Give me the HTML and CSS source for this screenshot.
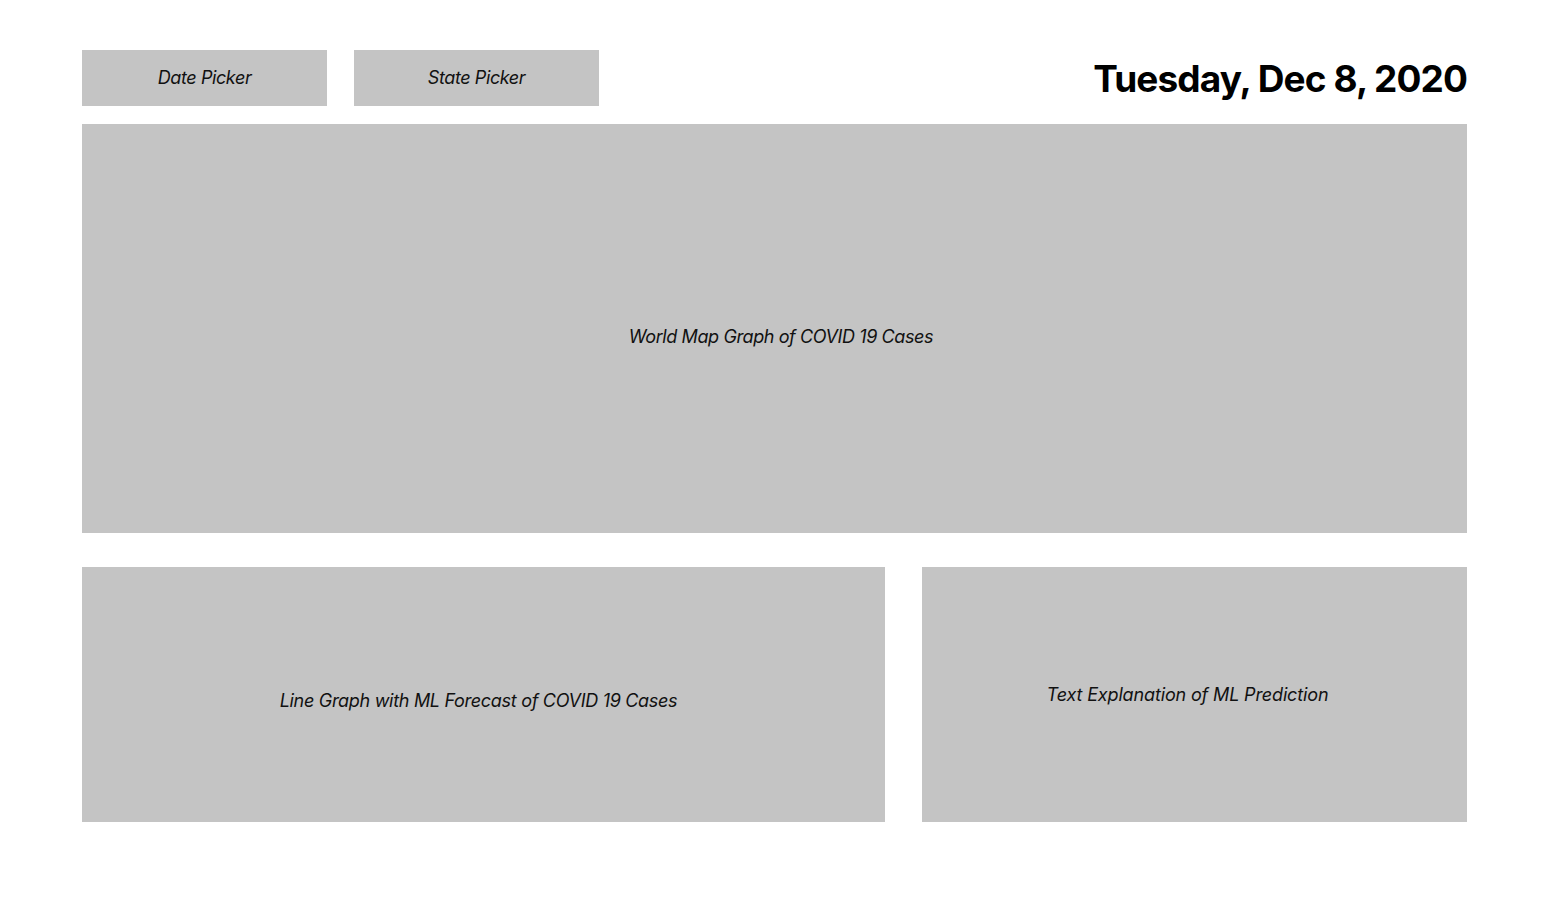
FILE: index.html
```html
<!DOCTYPE html>
<html lang="en">
<head>
<meta charset="utf-8">
<title>COVID 19 Dashboard</title>
<link rel="stylesheet" href="styles.css">
</head>
<body>
<div class="page">
  <header class="header">
    <div class="pickers">
      <div class="box picker">Date Picker</div>
      <div class="box picker">State Picker</div>
    </div>
    <h1 class="date">Tuesday, Dec 8, 2020</h1>
  </header>
  <section class="box map">World Map Graph of COVID 19 Cases</section>
  <div class="bottom">
    <section class="box line">Line Graph with ML Forecast of COVID 19 Cases</section>
    <section class="box explain">Text Explanation of ML Prediction</section>
  </div>
</div>
</body>
</html>
```
FILE: styles.css
```css
html, body {
  margin: 0;
  padding: 0;
  background: #ffffff;
}
body {
  font-family: Inter, "Liberation Sans", sans-serif;
  color: #000;
}
.page {
  padding: 50px 94px 0 82px;
  display: flex;
  flex-direction: column;
}
.header {
  display: flex;
  justify-content: space-between;
  align-items: center;
  height: 56px;
}
.pickers {
  display: flex;
  gap: 27px;
}
.box {
  background: #c4c4c4;
  display: flex;
  align-items: center;
  justify-content: center;
  font-style: italic;
  font-size: 18px;
  letter-spacing: -0.4px;
  color: #111;
  box-sizing: border-box;
}
.picker {
  width: 245px;
  height: 56px;
  padding-bottom: 2px;
}
.date {
  margin: 0;
  font-size: 37px;
  font-weight: 700;
  letter-spacing: -0.9px;
  line-height: 1;
}
.map {
  margin-top: 18px;
  height: 409px;
  padding: 16px 0 0 13px;
}
.bottom {
  margin-top: 34px;
  display: flex;
  gap: 37px;
  height: 255px;
}
.line {
  width: 803px;
  padding: 12px 10px 0 0;
  letter-spacing: -0.3px;
}
.explain {
  flex: 1;
  padding: 0 14px 0 0;
  letter-spacing: -0.15px;
}
```
